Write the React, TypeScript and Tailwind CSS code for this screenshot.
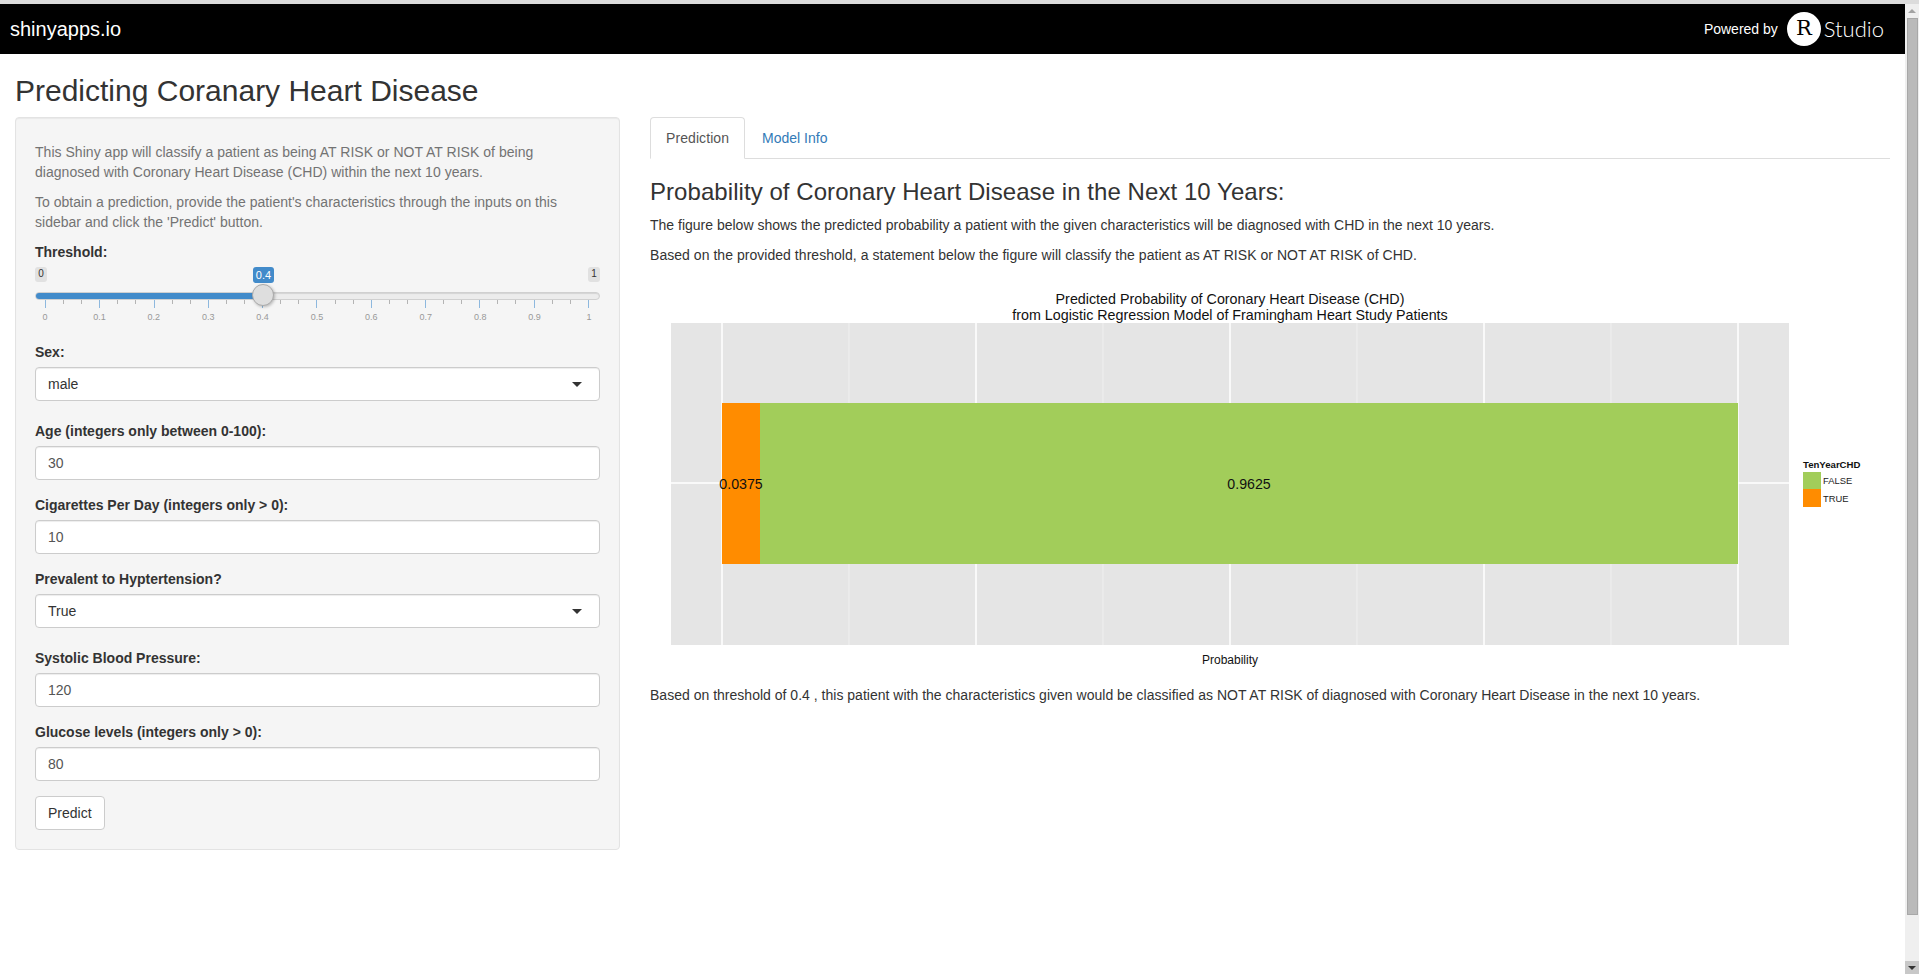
const ticks = Array.from({ length: 31 }, (_, i) => i);
const tickLabels = ["0", "0.1", "0.2", "0.3", "0.4", "0.5", "0.6", "0.7", "0.8", "0.9", "1"];
const majorX = [722, 976, 1230, 1484, 1738];
const minorX = [849, 1103, 1357, 1611];

function Label({ children }: { children: React.ReactNode }) {
  return <label className="block h-5 mb-[5px] text-sm leading-5 font-bold text-[#333]">{children}</label>;
}

function SelectField({ label, value }: { label: string; value: string }) {
  return (
    <div className="mb-5">
      <Label>{label}</Label>
      <div className="flex h-[34px] items-center justify-between rounded border border-[#ccc] bg-white pl-3 pr-[17px] text-sm text-[#333] shadow-[inset_0_1px_1px_rgba(0,0,0,0.075)]">
        <span>{value}</span>
        <span className="h-0 w-0 border-x-[5px] border-t-[5px] border-x-transparent border-t-[#333]" />
      </div>
    </div>
  );
}

function TextField({ label, value }: { label: string; value: string }) {
  return (
    <div className="mb-[15px]">
      <Label>{label}</Label>
      <input
        readOnly
        value={value}
        className="block h-[34px] w-full rounded border border-[#ccc] bg-white px-3 text-sm text-[#555] shadow-[inset_0_1px_1px_rgba(0,0,0,0.075)] outline-none"
      />
    </div>
  );
}

function Slider() {
  return (
    <div className="h-[100px]">
      <Label>Threshold:</Label>
      <div className="relative">
        <div className="flex h-4 justify-between text-[10px] leading-[14px] text-[#333]">
          <span className="h-[15px] w-3 rounded-[3px] bg-[#e1e1e1] text-center">0</span>
          <span className="h-[15px] w-3 rounded-[3px] bg-[#e1e1e1] text-center">1</span>
        </div>
        <span className="absolute left-[218px] top-0 h-4 w-[21px] rounded-[3px] bg-[#428bca] text-center text-[11px] leading-4 text-white">
          0.4
        </span>
        <div className="mt-[9px] flex h-2 overflow-hidden rounded-full border border-[#d0d0d0] bg-[#ececec] shadow-[inset_0_1px_1px_rgba(0,0,0,0.1)]">
          <div className="-m-px h-2 w-[228px] bg-[#428bca]" />
        </div>
        <span className="absolute left-[217px] top-[17px] h-[22px] w-[22px] rounded-full border border-[#ababab] bg-[#dedede] shadow-[1px_1px_3px_rgba(0,0,0,0.25)]" />
        <div className="ml-[10px] flex h-2 w-[544px] justify-between">
          {ticks.map((t) => (
            <span key={t} className={t % 3 === 0 ? "h-2 w-px bg-[#8db8de]" : "h-1 w-px bg-[#b4b4b4]"} />
          ))}
        </div>
        <div className="ml-[10px] mt-[3px] flex w-[544px] justify-between text-[9px] leading-3 text-[#999]">
          {tickLabels.map((t) => (
            <span key={t} className="flex w-0 justify-center">
              {t}
            </span>
          ))}
        </div>
      </div>
    </div>
  );
}

function Sidebar() {
  return (
    <div className="w-[605px] rounded border border-[#e3e3e3] bg-[#f5f5f5] px-[19px] pb-[19px] pt-6 shadow-[inset_0_1px_1px_rgba(0,0,0,0.05)]">
      <p className="mb-[10px] text-sm leading-5 tracking-[0.03px] text-[#737373]">
        This Shiny app will classify a patient as being AT RISK or NOT AT RISK of being diagnosed with Coronary Heart
        Disease (CHD) within the next 10 years.
      </p>
      <p className="mb-[10px] text-sm leading-5 tracking-[0.02px] text-[#737373]">
        To obtain a prediction, provide the patient's characteristics through the inputs on this sidebar and click the
        'Predict' button.
      </p>
      <Slider />
      <SelectField label="Sex:" value="male" />
      <TextField label="Age (integers only between 0-100):" value="30" />
      <TextField label="Cigarettes Per Day (integers only > 0):" value="10" />
      <SelectField label="Prevalent to Hyptertension?" value="True" />
      <TextField label="Systolic Blood Pressure:" value="120" />
      <TextField label="Glucose levels (integers only > 0):" value="80" />
      <button className="h-[34px] rounded border border-[#ccc] bg-white px-3 text-sm text-[#333]">Predict</button>
    </div>
  );
}

// plot is 1240x400, drawn from x=650 y=285 of the page
function Plot() {
  return (
    <svg className="mt-5 block" width="1240" height="400" viewBox="650 285 1240 400" fontFamily="'Liberation Sans', Arial, sans-serif">
      <text x="1230" y="299" textAnchor="middle" dominantBaseline="central" fontSize="14.3" fill="#111">
        Predicted Probability of Coronary Heart Disease (CHD)
      </text>
      <text x="1230" y="315" textAnchor="middle" dominantBaseline="central" fontSize="14.3" fill="#111">
        from Logistic Regression Model of Framingham Heart Study Patients
      </text>
      <rect x="671" y="323" width="1118" height="322" fill="#e5e5e5" />
      {minorX.map((x) => (
        <line key={x} x1={x} x2={x} y1="323" y2="645" stroke="#f0f0f0" strokeWidth="1" />
      ))}
      {majorX.map((x) => (
        <line key={x} x1={x} x2={x} y1="323" y2="645" stroke="#fff" strokeWidth="1.5" />
      ))}
      <line x1="671" x2="1789" y1="483" y2="483" stroke="#fff" strokeWidth="1.5" />
      <rect x="722" y="403" width="38" height="161" fill="#ff8c00" />
      <rect x="760" y="403" width="978" height="161" fill="#a2cd5a" />
      <text x="741" y="483.5" textAnchor="middle" dominantBaseline="central" fontSize="14.2" fill="#111">
        0.0375
      </text>
      <text x="1249" y="483.5" textAnchor="middle" dominantBaseline="central" fontSize="14.2" fill="#111">
        0.9625
      </text>
      <text x="1230" y="660" textAnchor="middle" dominantBaseline="central" fontSize="12" fill="#111">
        Probability
      </text>
      <text x="1803" y="464.5" dominantBaseline="central" fontSize="9.6" fontWeight="700" fill="#111">
        TenYearCHD
      </text>
      <rect x="1803" y="472" width="18" height="17" fill="#a2cd5a" />
      <rect x="1803" y="489" width="18" height="18" fill="#ff8c00" />
      <text x="1823" y="480" dominantBaseline="central" fontSize="9.4" fill="#222">
        FALSE
      </text>
      <text x="1823" y="498" dominantBaseline="central" fontSize="9.4" fill="#222">
        TRUE
      </text>
    </svg>
  );
}

function MainPanel() {
  return (
    <div className="w-[1240px]">
      <div className="flex h-[42px] border-b border-[#ddd] text-sm">
        <div className="mr-[2px] h-[42px] rounded-t border border-[#ddd] border-b-white bg-white px-[15px] leading-10 tracking-[0.08px] text-[#555]">
          Prediction
        </div>
        <a className="px-[15px] leading-[42px] text-[#337ab7]">Model Info</a>
      </div>
      <h3 className="mb-[10px] mt-5 text-2xl font-normal leading-[26px] tracking-[0.06px] text-[#333]">
        Probability of Coronary Heart Disease in the Next 10 Years:
      </h3>
      <p className="mb-[10px] text-sm leading-5 text-[#333]">
        The figure below shows the predicted probability a patient with the given characteristics will be diagnosed with
        CHD in the next 10 years.
      </p>
      <p className="mb-[10px] text-sm leading-5 tracking-[0.04px] text-[#333]">
        Based on the provided threshold, a statement below the figure will classify the patient as AT RISK or NOT AT RISK
        of CHD.
      </p>
      <Plot />
      <p className="text-sm leading-5 tracking-[0.012px] text-[#333]">
        Based on threshold of 0.4 , this patient with the characteristics given would be classified as NOT AT RISK of
        diagnosed with Coronary Heart Disease in the next 10 years.
      </p>
    </div>
  );
}

function Scrollbar() {
  return (
    <div className="flex h-full w-[14px] shrink-0 flex-col items-center bg-[#efefef]">
      <div className="flex h-[14px] w-full items-center justify-center">
        <span className="h-0 w-0 border-x-[4px] border-b-[4px] border-x-transparent border-b-[#a3a3a3]" />
      </div>
      <div className="h-[897px] w-[11px] border border-[#a8a8a8] bg-[#bababa]" />
      <div className="flex-1" />
      <div className="flex h-[13px] w-full items-center justify-center bg-[#c8c8c8]">
        <span className="h-0 w-0 border-x-[4px] border-t-[4px] border-x-transparent border-t-[#333]" />
      </div>
    </div>
  );
}

export default function App() {
  return (
    <div className="flex h-screen flex-col overflow-hidden bg-white font-['Liberation_Sans',Arial,sans-serif]">
      <div className="h-[4px] shrink-0 bg-[#dcdcdc]" />
      <div className="flex min-h-0 flex-1">
        <div className="min-w-0 flex-1">
          <div className="flex h-[50px] items-center justify-between bg-black pl-[10px] pr-[21px] text-white">
            <span className="text-xl">shinyapps.io</span>
            <div className="flex items-center">
              <span className="mr-[9px] text-sm">Powered by</span>
              <span className="flex h-[34px] w-[34px] items-center justify-center rounded-full bg-white font-['DejaVu_Serif',serif] text-[21px] text-black">
                R
              </span>
              <span className="ml-[3px] font-['Lato',sans-serif] text-[22px] font-light leading-none">Studio</span>
            </div>
          </div>
          <div className="px-[15px]">
            <h2 className="mb-[10px] mt-5 text-[30px] font-normal leading-[33px] text-[#333]">
              Predicting Coranary Heart Disease
            </h2>
            <div className="flex gap-[30px]">
              <Sidebar />
              <MainPanel />
            </div>
          </div>
        </div>
        <Scrollbar />
      </div>
    </div>
  );
}
